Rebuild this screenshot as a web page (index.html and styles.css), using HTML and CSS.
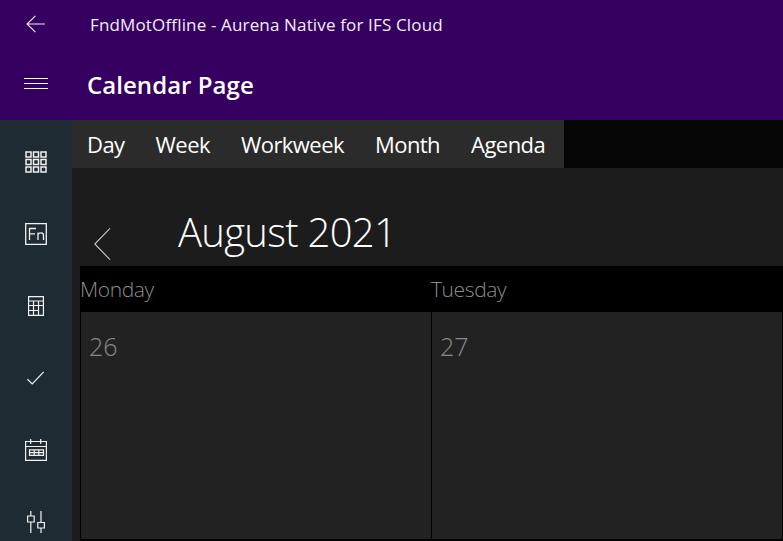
FILE: index.html
```html
<!DOCTYPE html>
<html lang="en">
<head>
<meta charset="utf-8">
<title>Calendar Page</title>
<link rel="stylesheet" href="styles.css">
</head>
<body>
<header class="header">
  <div class="title-row">
    <div class="icon-slot">
      <svg width="22" height="18" viewBox="0 0 22 18" fill="none" stroke="#f3edf7" stroke-width="1.1"><path d="M10.400 .8 2 9l8.400 8.200M2 9H20"/></svg>
    </div>
    <span class="app-title">FndMotOffline - Aurena Native for IFS Cloud</span>
  </div>
  <div class="page-row">
    <div class="icon-slot">
      <svg width="24" height="12" viewBox="0 0 24 12" stroke="#fff" stroke-width="1"><path d="M0 .5h24M0 5.500h24M0 10.500h24"/></svg>
    </div>
    <h1 class="page-title">Calendar Page</h1>
  </div>
</header>
<div class="body">
  <nav class="sidebar">
    <div class="nav-item">
      <svg width="22" height="22" viewBox="0 0 22 22" fill="none" stroke="#f0f1f2" stroke-width="1.5">
        <path d="M1 1h5v5H1zM8.500 1h5v5h-5zM16 1h5v5h-5zM1 8.500h5v5H1zM8.500 8.500h5v5h-5zM16 8.500h5v5h-5zM1 16h5v5H1zM8.500 16h5v5h-5zM16 16h5v5h-5z"/>
      </svg>
    </div>
    <div class="nav-item">
      <svg width="22" height="22" viewBox="0 0 22 22" fill="none" stroke="#f0f1f2" stroke-width="1.3">
        <path d="M.7.7h20.600v20.600H.7zM4.500 17V5.500H11M4.500 10.800H10M13 17V9.500M13 11.500c1-1.900 5.500-2.800 5.500 1V17"/>
      </svg>
    </div>
    <div class="nav-item">
      <svg width="16" height="20" viewBox="0 0 16 20" fill="none" stroke="#f0f1f2" stroke-width="1.200">
        <path d="M.6.6h14.800v18.800H.6zM.6 5h14.800M.6 9.500h14.800M.6 14.500h9.900M5.500 5v14.400M10.500 5v14.400"/>
      </svg>
    </div>
    <div class="nav-item">
      <svg width="18" height="14" viewBox="0 0 18 14" fill="none" stroke="#f0f1f2" stroke-width="1.200"><path d="M.4 8.300 5.200 13 16.700 .8"/></svg>
    </div>
    <div class="nav-item">
      <svg width="22" height="22" viewBox="0 0 22 22" fill="none" stroke="#f0f1f2" stroke-width="1.200">
        <path d="M.6 2.500h20.800v18.900H.6zM.6 7.500h20.800M5.700 0v5M15.700 0v5M4.500 10.800h14v5.600h-14zM4.500 13.600h14M9.200 10.800v5.600M13.800 10.800v5.600"/>
      </svg>
    </div>
    <div class="nav-item">
      <svg width="18" height="22" viewBox="0 0 18 22" fill="none" stroke="#f0f1f2" stroke-width="1.200">
        <path d="M3.800 0v5M3.800 11v11M14 0v11.500M14 17v5M.6 5h6.600v6H.6zM10.800 11.500h6.600V17h-6.600z"/>
      </svg>
    </div>
  </nav>
  <main class="content">
    <div class="tabbar">
      <div class="tabs">
        <span class="tab">Day</span>
        <span class="tab">Week</span>
        <span class="tab">Workweek</span>
        <span class="tab">Month</span>
        <span class="tab">Agenda</span>
      </div>
    </div>
    <div class="month-row">
      <svg class="prev" width="18" height="32" viewBox="0 0 18 32" fill="none" stroke="#c8c8c8" stroke-width="1.100"><path d="M16 .4 .8 16 16 31.600"/></svg>
      <h2 class="month">August 2021</h2>
    </div>
    <div class="calendar">
      <div class="day-head">
        <span class="day-name">Monday</span>
        <span class="day-name">Tuesday</span>
      </div>
      <div class="cells">
        <div class="cell">26</div>
        <div class="cell">27</div>
      </div>
    </div>
  </main>
</div>
</body>
</html>
```
FILE: styles.css
```css
* { box-sizing: border-box; }
html, body { margin: 0; height: 100%; }
body {
  width: 783px;
  height: 541px;
  overflow: hidden;
  background: #1c1c1c;
  color: #fff;
  font-family: "Open Sans", "Noto Sans", sans-serif;
  display: flex;
  flex-direction: column;
}
.header { height: 120px; background: #360061; flex: none; }
.title-row { height: 48px; display: flex; align-items: center; }
.page-row { height: 72px; display: flex; align-items: center; }
.icon-slot { width: 72px; display: flex; justify-content: center; }
.app-title { margin-left: 18px; font-size: 17px; color: #f3edf7; letter-spacing: 0.15px; }
.page-title { margin: 0 0 0 15px; font-size: 24px; font-weight: 600; letter-spacing: 0.05px; }
.body { flex: 1; display: flex; min-height: 0; }
.sidebar { width: 72px; flex: none; background: #1f2b32; display: flex; flex-direction: column; padding-top: 6px; overflow: hidden; }
.nav-item { height: 72px; flex: none; display: flex; align-items: center; justify-content: center; }
.content { flex: 1; display: flex; flex-direction: column; min-width: 0; }
.tabbar { height: 48px; background: #050505; flex: none; }
.tabs { display: inline-flex; height: 48px; width: 492px; background: #2b2b2b; align-items: center; padding-left: 15px; gap: 31px; }
.tab { font-size: 22px; letter-spacing: -0.55px; color: #fff; }
.month-row { height: 98px; flex: none; position: relative; display: flex; }
.prev { position: absolute; left: 22px; top: 60px; }
.month { margin: 36px 0 0 106px; font-size: 40px; font-weight: 300; line-height: 56px; letter-spacing: -0.7px; color: #fff; }
.calendar { margin-left: 8px; flex: 1; display: flex; flex-direction: column; min-height: 0; }
.day-head { height: 46px; flex: none; background: #000; display: grid; grid-template-columns: 351px 351px; align-items: center; }
.day-name { font-size: 21px; font-weight: 300; color: #8c8c8c; letter-spacing: -0.4px; }
.cells { flex: 1; display: grid; grid-template-columns: 351px 352px; border-bottom: 2px solid #000; background: #000; }
.cell { background: #222; border-left: 1px solid #000; padding: 16px 0 0 8px; font-size: 25px; font-weight: 300; line-height: 36px; color: #8a8a8a; }
.cell + .cell { border-right: 1px solid #000; }
```
